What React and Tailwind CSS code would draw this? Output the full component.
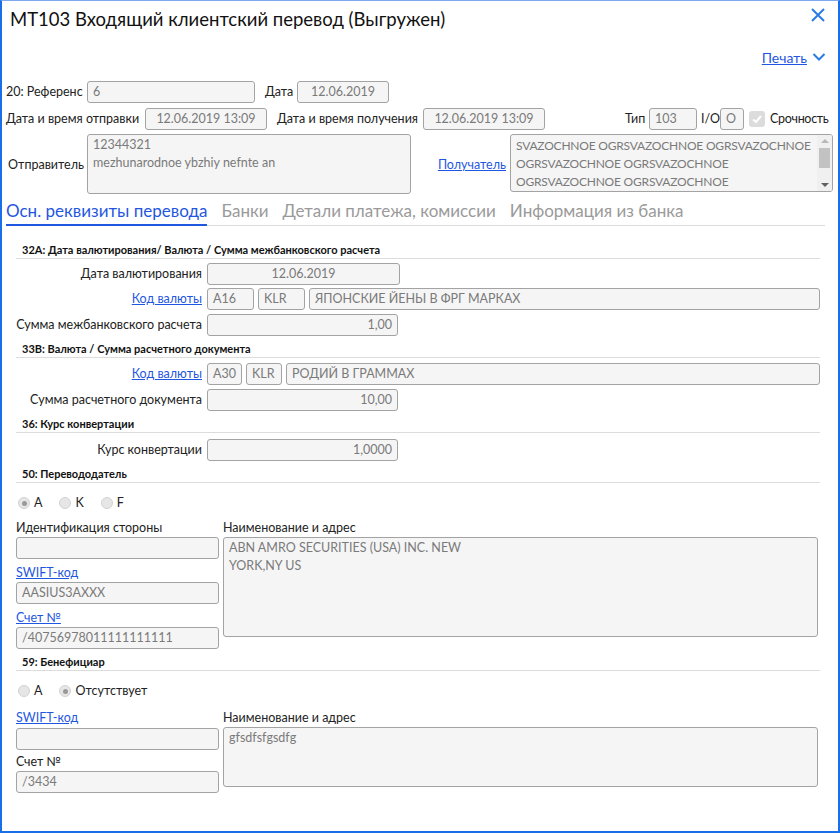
import React from 'react';

const F = { fontFamily: 'Lato, "Noto Sans", sans-serif' };

const Box = ({ className = '', children, align = 'left' }) => (
  <div
    className={`h-[22px] border border-[#a3a3a3] rounded-[3px] bg-[#f5f5f5] text-[#7a7a7a] text-[12.5px] leading-[20px] px-[5px] whitespace-nowrap overflow-hidden shrink-0 ${
      align === 'center' ? 'text-center' : align === 'right' ? 'text-right' : 'text-left'
    } ${className}`}
  >
    {children}
  </div>
);

const Link = ({ children, className = '' }) => (
  <span className={`text-[#1f57e0] underline ${className}`}>{children}</span>
);

const SectionHead = ({ children, className = '' }) => (
  <div className={`border-b border-[#dcdcdc] pb-[1px] ${className}`}>
    <div className="pl-[6px] text-[11px] font-bold text-[#111] leading-[14px]">{children}</div>
  </div>
);

const Radio = ({ checked, label }) => (
  <div className="flex items-center gap-[4px] text-[12.5px] text-[#222]">
    <span className="w-[12px] h-[12px] rounded-full bg-[#e6e6e6] border border-[#d2d2d2] flex items-center justify-center">
      {checked && <span className="w-[5px] h-[5px] rounded-full bg-[#9a9a9a]" />}
    </span>
    {label}
  </div>
);

const Row = ({ label, link, children, className = '' }) => (
  <div className={`flex items-center ${className}`}>
    <div className="w-[191px] shrink-0 flex justify-end pr-[5px] text-[12.5px] text-[#222] whitespace-nowrap">
      <span>{link ? <Link>{label}</Link> : label}</span>
    </div>
    {children}
  </div>
);

export default function App() {
  return (
    <div style={F} className="w-[840px] h-[833px] bg-white border-2 border-[#1a6ee8] border-t border-t-[#7fa9ee] relative overflow-hidden text-[#222]">
      {/* header */}
      <div className="pl-[8px] pt-[4px] text-[18.5px] leading-[28px] text-[#111]">
        MT103 Входящий клиентский перевод (Выгружен)
      </div>
      <svg className="absolute top-[6px] right-[12px]" width="16" height="16" viewBox="0 0 16 16">
        <path d="M2 2 L14 14 M14 2 L2 14" stroke="#2c7be5" strokeWidth="2" fill="none" />
      </svg>
      <div className="flex justify-end items-center pr-[12px] mt-[14px] h-[20px]">
        <span className="text-[#1f57e0] underline text-[14px]">Печать</span>
        <svg className="ml-[5px]" width="14" height="10" viewBox="0 0 14 10">
          <path d="M1.5 2 L7 7.5 L12.5 2" stroke="#2c7be5" strokeWidth="2" fill="none" />
        </svg>
      </div>

      {/* top fields */}
      <div className="px-[4px] mt-[14px] text-[12.5px] whitespace-nowrap">
        <div className="flex items-center h-[22px]">
          <span className="w-[81px] shrink-0">20: Референс</span>
          <Box className="w-[168px]">6</Box>
          <span className="ml-[10px] w-[32px] shrink-0">Дата</span>
          <Box className="w-[92px]" align="center">12.06.2019</Box>
        </div>
        <div className="flex items-center h-[22px] mt-[5px]">
          <span className="w-[139px] shrink-0">Дата и время отправки</span>
          <Box className="w-[122px]" align="center">12.06.2019 13:09</Box>
          <span className="ml-[10px] w-[146px] shrink-0">Дата и время получения</span>
          <Box className="w-[122px]" align="center">12.06.2019 13:09</Box>
          <span className="ml-[80px] w-[24px] shrink-0">Тип</span>
          <Box className="w-[48px]">103</Box>
          <span className="ml-[4px] w-[19px] shrink-0">I/O</span>
          <Box className="w-[24px]">O</Box>
          <span className="ml-[5px] w-[16px] h-[16px] shrink-0 rounded-[3px] bg-[#dcdcdc] flex items-center justify-center">
            <svg width="12" height="12" viewBox="0 0 12 12">
              <path d="M2 6.5 L5 9 L10 3" stroke="#fff" strokeWidth="2" fill="none" />
            </svg>
          </span>
          <span className="ml-[5px] tracking-[-0.3px]">Срочность</span>
        </div>
        <div className="flex mt-[4px]">
          <div className="w-[81px] shrink-0 flex items-center justify-end pr-[3px] pt-[2px]">Отправитель</div>
          <div className="w-[324px] h-[60px] border border-[#a3a3a3] rounded-[3px] bg-[#f5f5f5] text-[#7a7a7a] px-[5px] pt-[1px] leading-[18px]">
            12344321
            <br />
            mezhunarodnoe ybzhiy nefnte an
          </div>
          <div className="w-[99px] shrink-0 flex items-center justify-end pr-[4px] pt-[2px]">
            <Link>Получатель</Link>
          </div>
          <div className="w-[323px] h-[58px] border border-[#a3a3a3] rounded-[3px] bg-[#f5f5f5] text-[#7a7a7a] flex overflow-hidden">
            <div className="flex-1 pl-[5px] pt-[2px] leading-[18px] overflow-hidden text-[12px] tracking-[-0.2px]">
              SVAZOCHNOE OGRSVAZOCHNOE OGRSVAZOCHNOE
              <br />
              OGRSVAZOCHNOE OGRSVAZOCHNOE
              <br />
              OGRSVAZOCHNOE OGRSVAZOCHNOE
            </div>
            <div className="w-[15px] shrink-0 bg-[#f0f0f0] flex flex-col items-center">
              <svg width="10" height="12" viewBox="0 0 10 12">
                <path d="M1 8 L5 4 L9 8 Z" fill="#b8b8b8" />
              </svg>
              <div className="w-[11px] h-[20px] bg-[#c2c2c2] mt-[1px]" />
              <div className="flex-1" />
              <svg width="10" height="12" viewBox="0 0 10 12">
                <path d="M1 4 L5 8 L9 4 Z" fill="#606060" />
              </svg>
            </div>
          </div>
        </div>
      </div>

      {/* tabs */}
      <div className="mt-[5px] ml-[4px] mr-[13px] flex items-end gap-[14px] border-b border-[#dcdcdc] text-[17px] leading-[24px] whitespace-nowrap">
        <div className="text-[#1f57e0] border-b-2 border-[#1f57e0] -mb-[1px] pb-[1px]">Осн. реквизиты перевода</div>
        <div className="text-[#9a9a9a] pb-[2px]">Банки</div>
        <div className="text-[#9a9a9a] pb-[2px]">Детали платежа, комиссии</div>
        <div className="text-[#9a9a9a] pb-[2px]">Информация из банка</div>
      </div>

      {/* body */}
      <div className="pl-[14px] pr-[18px] mt-[17px]">
        <SectionHead>32A: Дата валютирования/ Валюта / Сумма межбанковского расчета</SectionHead>
        <Row label="Дата валютирования" className="mt-[4px]">
          <Box className="w-[193px]" align="center">12.06.2019</Box>
        </Row>
        <Row label="Код валюты" link className="mt-[3px]">
          <Box className="w-[47px]">A16</Box>
          <Box className="w-[47px] ml-[4px]">KLR</Box>
          <Box className="flex-1 shrink ml-[4px]">ЯПОНСКИЕ ЙЕНЫ В ФРГ МАРКАХ</Box>
        </Row>
        <Row label="Сумма межбанковского расчета" className="mt-[4px]">
          <Box className="w-[191px]" align="right">1,00</Box>
        </Row>

        <SectionHead className="mt-[6px]">33B: Валюта / Сумма расчетного документа</SectionHead>
        <Row label="Код валюты" link className="mt-[5px]">
          <Box className="w-[35px]">A30</Box>
          <Box className="w-[36px] ml-[4px]">KLR</Box>
          <Box className="flex-1 shrink ml-[4px]">РОДИЙ В ГРАММАХ</Box>
        </Row>
        <Row label="Сумма расчетного документа" className="mt-[4px]">
          <Box className="w-[191px]" align="right">10,00</Box>
        </Row>

        <SectionHead className="mt-[6px]">36: Курс конвертации</SectionHead>
        <Row label="Курс конвертации" className="mt-[6px]">
          <Box className="w-[191px]" align="right">1,0000</Box>
        </Row>

        <SectionHead className="mt-[6px]">50: Перевододатель</SectionHead>
        <div className="flex items-center gap-[17px] pl-[2px] mt-[12px] h-[16px]">
          <Radio checked label="A" />
          <Radio label="K" />
          <Radio label="F" />
        </div>
        <div className="flex gap-[4px] mt-[8px] mr-[2px]">
          <div className="w-[203px] shrink-0 text-[12.5px]">
            <div className="leading-[18px]">Идентификация стороны</div>
            <Box />
            <div className="mt-[5px] leading-[18px]">
              <Link>SWIFT-код</Link>
            </div>
            <Box>AASIUS3AXXX</Box>
            <div className="mt-[5px] leading-[18px]">
              <Link>Счет №</Link>
            </div>
            <Box>/40756978011111111111</Box>
          </div>
          <div className="flex-1 text-[12.5px]">
            <div className="leading-[18px]">Наименование и адрес</div>
            <div className="h-[100px] border border-[#a3a3a3] rounded-[3px] bg-[#f5f5f5] text-[#7a7a7a] px-[5px] pt-[1px] leading-[18px]">
              ABN AMRO SECURITIES (USA) INC. NEW
              <br />
              YORK,NY US
            </div>
          </div>
        </div>

        <SectionHead className="mt-[6px]">59: Бенефициар</SectionHead>
        <div className="flex items-center gap-[17px] pl-[2px] mt-[12px] h-[16px]">
          <Radio label="A" />
          <Radio checked label="Отсутствует" />
        </div>
        <div className="flex gap-[4px] mt-[10px] mr-[2px]">
          <div className="w-[203px] shrink-0 text-[12.5px]">
            <div className="leading-[18px]">
              <Link>SWIFT-код</Link>
            </div>
            <Box className="mt-[1px]" />
            <div className="mt-[3px] leading-[18px]">Счет №</div>
            <Box>/3434</Box>
          </div>
          <div className="flex-1 text-[12.5px]">
            <div className="leading-[18px]">Наименование и адрес</div>
            <div className="h-[60px] border border-[#a3a3a3] rounded-[3px] bg-[#f5f5f5] text-[#7a7a7a] px-[5px] pt-[1px] leading-[18px]">
              gfsdfsfgsdfg
            </div>
          </div>
        </div>
      </div>
    </div>
  );
}
